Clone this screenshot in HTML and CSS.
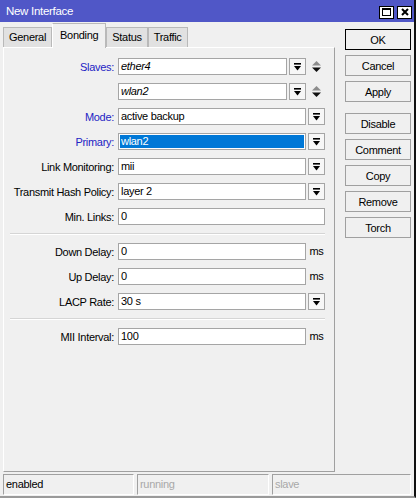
FILE: index.html
```html
<!DOCTYPE html>
<html lang="en">
<head>
  <meta charset="UTF-8">
  <title>New Interface</title>
  <link rel="stylesheet" href="styles.css">
</head>
<body>
  <div class="window">
    <div class="titlebar">
      <span class="title">New Interface</span>
      <div class="title-btns">
        <span class="tbtn">
          <svg width="9" height="8" viewBox="0 0 9 8"><rect x="0.5" y="0.5" width="8" height="7" fill="none" stroke="#000"/><rect x="0" y="0" width="9" height="2" fill="#000"/></svg>
        </span>
        <span class="tbtn">
          <svg width="8" height="8" viewBox="0 0 8 8"><path d="M1 1L7 7M7 1L1 7" stroke="#000" stroke-width="2"/></svg>
        </span>
      </div>
    </div>

    <div class="main">
      <div class="left">
        <div class="tabs">
          <div class="tab">General</div>
          <div class="tab active">Bonding</div>
          <div class="tab">Status</div>
          <div class="tab">Traffic</div>
        </div>

        <div class="panel">
          <div class="row">
            <span class="lbl blue">Slaves:</span>
            <div class="ctl">
              <div class="field italic">ether4</div>
              <span class="dd"><svg class="dd-icon" width="7" height="8" viewBox="0 0 7 8"><rect width="7" height="1.6"/><path d="M0 3h7L3.5 7.5z"/></svg></span>
              <span class="ud"><svg width="9" height="11" viewBox="0 0 9 11"><path d="M0 4.5L4.5 0L9 4.5z" fill="#8c8c8c"/><path d="M0 6.5h9L4.5 11z" fill="#111"/></svg></span>
            </div>
          </div>
          <div class="row">
            <span class="lbl"></span>
            <div class="ctl">
              <div class="field italic">wlan2</div>
              <span class="dd"><svg class="dd-icon" width="7" height="8" viewBox="0 0 7 8"><rect width="7" height="1.6"/><path d="M0 3h7L3.5 7.5z"/></svg></span>
              <span class="ud"><svg width="9" height="11" viewBox="0 0 9 11"><path d="M0 4.5L4.5 0L9 4.5z" fill="#8c8c8c"/><path d="M0 6.5h9L4.5 11z" fill="#111"/></svg></span>
            </div>
          </div>
          <div class="row">
            <span class="lbl blue">Mode:</span>
            <div class="ctl">
              <div class="field">active backup</div>
              <span class="dd"><svg class="dd-icon" width="7" height="8" viewBox="0 0 7 8"><rect width="7" height="1.6"/><path d="M0 3h7L3.5 7.5z"/></svg></span>
            </div>
          </div>
          <div class="row">
            <span class="lbl blue">Primary:</span>
            <div class="ctl">
              <div class="field selected"><span class="sel">wlan2</span></div>
              <span class="dd"><svg class="dd-icon" width="7" height="8" viewBox="0 0 7 8"><rect width="7" height="1.6"/><path d="M0 3h7L3.5 7.5z"/></svg></span>
            </div>
          </div>
          <div class="row">
            <span class="lbl">Link Monitoring:</span>
            <div class="ctl">
              <div class="field">mii</div>
              <span class="dd"><svg class="dd-icon" width="7" height="8" viewBox="0 0 7 8"><rect width="7" height="1.6"/><path d="M0 3h7L3.5 7.5z"/></svg></span>
            </div>
          </div>
          <div class="row">
            <span class="lbl">Transmit Hash Policy:</span>
            <div class="ctl">
              <div class="field">layer 2</div>
              <span class="dd"><svg class="dd-icon" width="7" height="8" viewBox="0 0 7 8"><rect width="7" height="1.6"/><path d="M0 3h7L3.5 7.5z"/></svg></span>
            </div>
          </div>
          <div class="row">
            <span class="lbl">Min. Links:</span>
            <div class="ctl">
              <div class="field">0</div>
            </div>
          </div>

          <div class="sep"></div>

          <div class="row">
            <span class="lbl">Down Delay:</span>
            <div class="ctl">
              <div class="field">0</div>
              <span class="unit">ms</span>
            </div>
          </div>
          <div class="row">
            <span class="lbl">Up Delay:</span>
            <div class="ctl">
              <div class="field">0</div>
              <span class="unit">ms</span>
            </div>
          </div>
          <div class="row">
            <span class="lbl">LACP Rate:</span>
            <div class="ctl">
              <div class="field">30 s</div>
              <span class="dd"><svg class="dd-icon" width="7" height="8" viewBox="0 0 7 8"><rect width="7" height="1.6"/><path d="M0 3h7L3.5 7.5z"/></svg></span>
            </div>
          </div>

          <div class="sep"></div>

          <div class="row">
            <span class="lbl">MII Interval:</span>
            <div class="ctl">
              <div class="field">100</div>
              <span class="unit">ms</span>
            </div>
          </div>
        </div>
      </div>

      <div class="buttons">
        <button class="btn default">OK</button>
        <button class="btn">Cancel</button>
        <button class="btn">Apply</button>
        <button class="btn spaced">Disable</button>
        <button class="btn">Comment</button>
        <button class="btn">Copy</button>
        <button class="btn">Remove</button>
        <button class="btn">Torch</button>
      </div>
    </div>

    <div class="statusbar">
      <div class="cell">enabled</div>
      <div class="cell off">running</div>
      <div class="cell off">slave</div>
    </div>
  </div>
</body>
</html>
```

FILE: styles.css
```css
body {
  margin: 0;
  font-family: "Liberation Sans", Arial, sans-serif;
  font-size: 11px;
  letter-spacing: -0.3px;
  color: #000;
  background: #f0f0f0;
}
.window {
  width: 416px;
  height: 498px;
  box-sizing: border-box;
  display: flex;
  flex-direction: column;
  background: #f0f0f0;
  border-right: 2px solid #111;
  border-bottom: 2px solid #9a9a9a;
}

/* title bar */
.titlebar {
  height: 22px;
  flex: none;
  display: flex;
  align-items: center;
  padding: 0 2px 0 6px;
  background: #5057c7;
  color: #fff;
  font-size: 11.5px;
}
.title {
  flex: 1;
}
.title-btns {
  display: flex;
  gap: 3px;
  margin-top: 2px;
}
.tbtn {
  width: 15px;
  height: 13px;
  box-sizing: border-box;
  border: 1px solid #000;
  background: #fff;
  display: flex;
  align-items: center;
  justify-content: center;
}

.main {
  flex: 1;
  display: flex;
  padding: 0 3px;
}
.left {
  width: 332px;
  display: flex;
  flex-direction: column;
}

/* tabs */
.tabs {
  height: 25px;
  display: flex;
  align-items: flex-end;
}
.tab {
  height: 20px;
  line-height: 19px;
  box-sizing: border-box;
  padding: 0 5px;
  border: 1px solid #b9b9b9;
  border-bottom: 0;
  background: #e1e1e1;
}
.tab.active {
  height: 25px;
  line-height: 22px;
  padding: 0 7px;
  margin: 0 0 -1px;
  background: #f0f0f0;
  border-left-color: #fff;
  position: relative;
  z-index: 1;
}

/* form panel */
.panel {
  flex: 1;
  display: flex;
  flex-direction: column;
  gap: 8px;
  padding: 10px 9px 0 0;
  border-top: 1px solid #fff;
  border-left: 1px solid #fff;
  border-right: 1px solid #a0a0a0;
  border-bottom: 1px solid #a0a0a0;
}
.row {
  display: grid;
  grid-template-columns: 110px 1fr;
  column-gap: 4px;
  height: 17px;
  align-items: center;
}
.lbl {
  text-align: right;
  white-space: nowrap;
}
.lbl.blue {
  color: #2323c4;
}
.ctl {
  display: flex;
  gap: 2px;
  height: 17px;
}
.field {
  flex: 1;
  box-sizing: border-box;
  height: 17px;
  padding: 0 2px;
  line-height: 15px;
  border: 1px solid #a5a5a5;
  background: #fff;
  white-space: nowrap;
  overflow: hidden;
}
.field.italic {
  font-style: italic;
}
.field.selected {
  padding: 0;
}
.sel {
  display: block;
  margin: 1px;
  padding: 0 1px;
  height: 13px;
  line-height: 13px;
  background: #0078d7;
  color: #fff;
}
.dd {
  width: 17px;
  box-sizing: border-box;
  border: 1px solid #a5a5a5;
  background: #f7f7f7;
  display: flex;
  align-items: center;
  justify-content: center;
}
.dd-icon {
  fill: #000;
}
.ud {
  width: 17px;
  display: flex;
  align-items: center;
  justify-content: center;
}
.unit {
  width: 17px;
  line-height: 17px;
  text-align: center;
}
.sep {
  flex: none;
  margin-left: 6px;
  border-top: 1px solid #d5d5d5;
  border-bottom: 1px solid #fff;
}

/* action buttons */
.buttons {
  width: 66px;
  margin-left: 10px;
  padding-top: 7px;
  display: flex;
  flex-direction: column;
  gap: 5px;
}
.btn {
  height: 21px;
  box-sizing: border-box;
  padding: 0;
  font: inherit;
  letter-spacing: inherit;
  color: #000;
  background: #f0f0f0;
  border: 1px solid #a0a0a0;
}
.btn.default {
  border-color: #000;
}
.btn.spaced {
  margin-top: 6px;
}

/* status bar */
.statusbar {
  height: 24px;
  flex: none;
  box-sizing: border-box;
  display: grid;
  grid-template-columns: 131px 132px 1fr;
  column-gap: 3px;
  padding: 2px 3px 1px 3px;
}
.cell {
  box-sizing: border-box;
  padding-left: 2px;
  line-height: 19px;
  border-top: 1px solid #a0a0a0;
  border-left: 1px solid #a0a0a0;
  border-right: 1px solid #fff;
  border-bottom: 1px solid #fff;
}
.cell.off {
  color: #a8a8a8;
}
```
